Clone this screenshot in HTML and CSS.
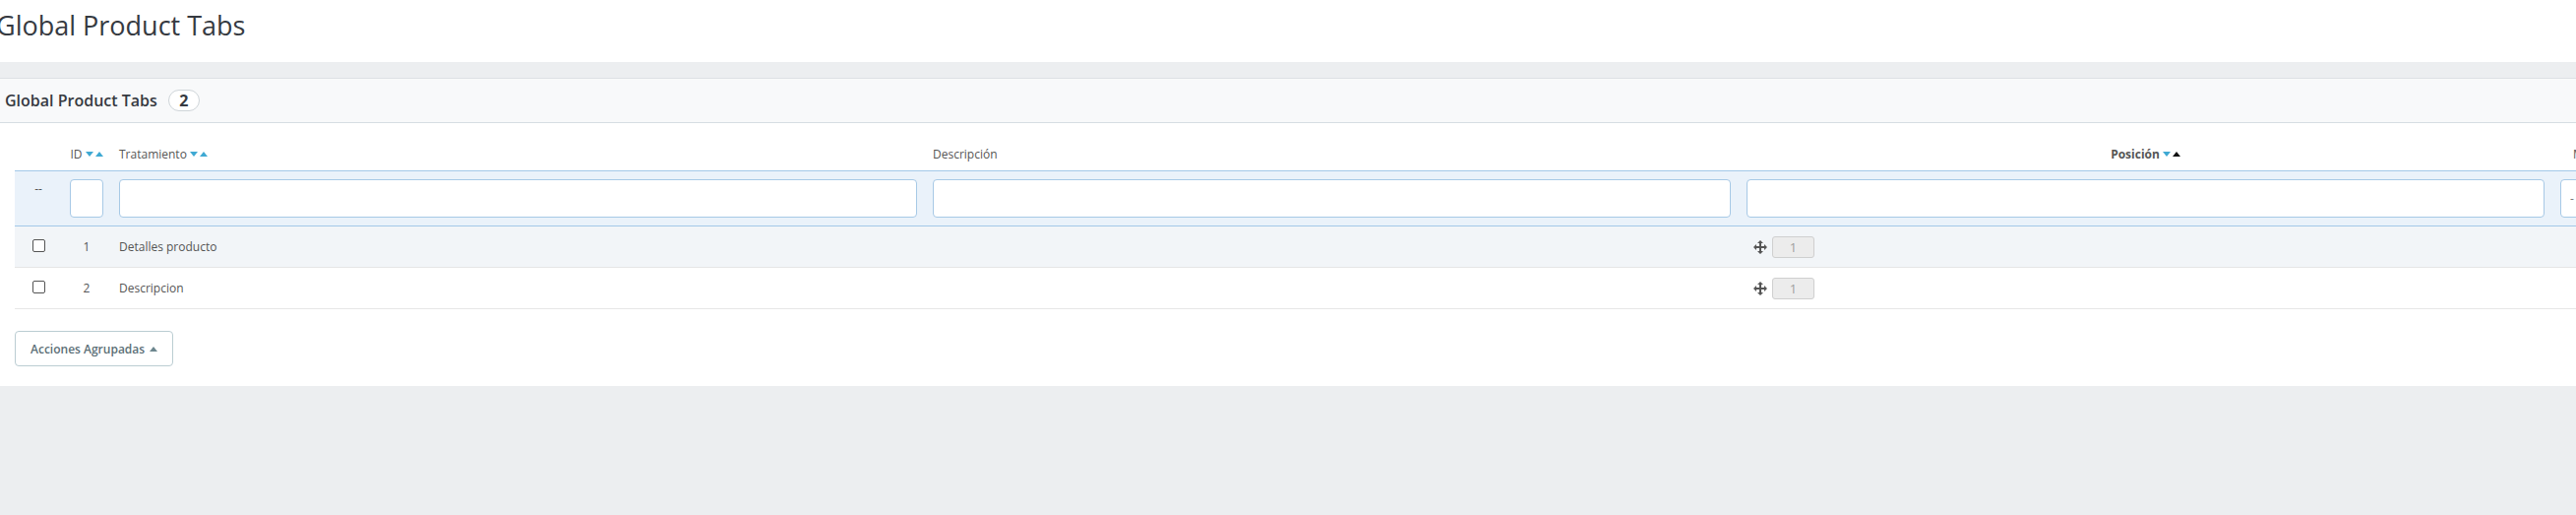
FILE: index.html
```html
<!DOCTYPE html>
<html lang="es">
<head>
<meta charset="utf-8">
<title>Global Product Tabs</title>
<link rel="stylesheet" href="styles.css">
</head>
<body>
<div class="page-head">
  <h1 class="page-title">Global Product Tabs</h1>
</div>
<div class="content">
  <div class="panel">
    <div class="panel-heading">
      <span class="heading-text">Global Product Tabs</span>
      <span class="badge">2</span>
    </div>
    <div class="panel-body">
      <table class="list">
        <colgroup>
          <col class="c-check">
          <col class="c-id">
          <col class="c-wide">
          <col class="c-wide">
          <col class="c-wide">
          <col class="c-last">
        </colgroup>
        <thead>
          <tr class="titles">
            <th></th>
            <th class="center">ID<svg class="sort" width="18" height="6" viewBox="0 0 18 6"><path d="M0 0h8l-4 5z" class="blue"/><path d="M10 5h8l-4-5z" class="blue"/></svg></th>
            <th>Tratamiento<svg class="sort" width="18" height="6" viewBox="0 0 18 6"><path d="M0 0h8l-4 5z" class="blue"/><path d="M10 5h8l-4-5z" class="blue"/></svg></th>
            <th>Descripción</th>
            <th class="center active">Posición<svg class="sort" width="18" height="6" viewBox="0 0 18 6"><path d="M0 0h8l-4 5z" class="blue"/><path d="M10 5h8l-4-5z" class="dark"/></svg></th>
            <th class="last-title">Mostrar</th>
          </tr>
          <tr class="filter">
            <td class="center dashes">--</td>
            <td><span class="field"></span></td>
            <td><span class="field"></span></td>
            <td><span class="field"></span></td>
            <td><span class="field"></span></td>
            <td><span class="field select">-</span></td>
          </tr>
        </thead>
        <tbody>
          <tr class="odd">
            <td class="center"><span class="cb"></span></td>
            <td class="center">1</td>
            <td>Detalles producto</td>
            <td></td>
            <td>
              <svg class="move" width="14" height="14" viewBox="0 0 14 14"><path d="M7 0L10 3H8V6H11V4L14 7L11 10V8H8V11H10L7 14L4 11H6V8H3V10L0 7L3 4V6H6V3H4Z"/></svg><span class="position">1</span>
            </td>
            <td></td>
          </tr>
          <tr>
            <td class="center"><span class="cb"></span></td>
            <td class="center">2</td>
            <td>Descripcion</td>
            <td></td>
            <td>
              <svg class="move" width="14" height="14" viewBox="0 0 14 14"><path d="M7 0L10 3H8V6H11V4L14 7L11 10V8H8V11H10L7 14L4 11H6V8H3V10L0 7L3 4V6H6V3H4Z"/></svg><span class="position">1</span>
            </td>
            <td></td>
          </tr>
        </tbody>
      </table>
      <div class="bulk">
        <button class="btn-bulk" type="button">Acciones Agrupadas<svg class="caret" width="8" height="5" viewBox="0 0 8 5"><path d="M0 5h8L4 0z"/></svg></button>
      </div>
    </div>
  </div>
</div>
</body>
</html>
```
FILE: styles.css
```css
html, body {
  overflow: hidden;
}

body {
  margin: 0;
  font-family: "Open Sans", "Liberation Sans", sans-serif;
  font-size: 12px;
  color: #555;
  background: #eceef0;
}

.page-head {
  background: #fff;
  height: 63px;
  box-sizing: border-box;
  padding-top: 8px;
}

.page-title {
  margin: 0 0 0 -4px;
  font-size: 27px;
  line-height: 36px;
  font-weight: 400;
  color: #363a41;
  white-space: nowrap;
}

.content {
  padding-top: 16px;
}

.panel {
  background: #fff;
  border-top: 1px solid #dde1e4;
  box-shadow: 0 2px 0 rgba(0, 0, 0, 0.05);
  padding-bottom: 20px;
}

.panel-heading {
  height: 44px;
  background: #f8f9fa;
  border-bottom: 1px solid #d6dde2;
  display: flex;
  align-items: center;
  gap: 11px;
  padding-left: 5px;
  font-size: 16px;
  font-weight: 600;
  color: #363a41;
}

.badge {
  box-sizing: border-box;
  height: 22px;
  min-width: 32px;
  border: 1px solid #cfd5d9;
  border-radius: 11px;
  background: #fff;
  display: inline-flex;
  align-items: center;
  justify-content: center;
  font-size: 16px;
  font-weight: 700;
  line-height: 1;
}

.panel-body {
  padding-left: 15px;
}

.list {
  border-collapse: separate;
  border-spacing: 0;
  table-layout: fixed;
  width: 2679px;
}

.c-check { width: 48px; }
.c-id { width: 50px; }
.c-wide { width: 827px; }
.c-last { width: 100px; }

.titles th {
  height: 48px;
  box-sizing: border-box;
  padding: 0 8px 8px;
  vertical-align: bottom;
  text-align: left;
  font-weight: 400;
  line-height: 17px;
  color: #555;
  white-space: nowrap;
  overflow: hidden;
}

.titles th.active {
  font-weight: 700;
}

.titles th.last-title {
  padding-left: 21px;
}

.center,
.titles th.center {
  text-align: center;
}

.sort {
  margin-left: 3px;
  vertical-align: 1px;
}

.sort .blue { fill: #3fa9d3; }
.sort .dark { fill: #111; }

.filter td {
  background: #eaf2fa;
  border-top: 1px solid #a3c8e8;
  border-bottom: 1px solid #a3c8e8;
  padding: 8px;
  vertical-align: top;
}

.filter td.dashes {
  padding-top: 9px;
  line-height: 17px;
}

.field {
  display: block;
  box-sizing: border-box;
  height: 39px;
  background: #fff;
  border: 1px solid #a7c9e6;
  border-radius: 4px;
  color: #777;
  line-height: 37px;
  padding-left: 9px;
}

tbody td {
  height: 42px;
  box-sizing: border-box;
  padding: 0 8px;
  border-bottom: 1px solid #e6e6e6;
  vertical-align: middle;
  line-height: 18px;
  color: #555;
  white-space: nowrap;
}

tbody tr.odd td {
  background: #f2f5f8;
}

.cb {
  display: inline-block;
  box-sizing: border-box;
  width: 13px;
  height: 13px;
  border: 1px solid #555;
  border-radius: 2px;
  background: #fff;
  vertical-align: middle;
  margin-bottom: 3px;
}

.move {
  fill: #555;
  vertical-align: middle;
  margin-left: 7px;
  margin-right: 5px;
}

.position {
  display: inline-block;
  vertical-align: middle;
  box-sizing: border-box;
  width: 43px;
  height: 22px;
  background: #ececec;
  border: 1px solid #cfcfcf;
  border-radius: 3px;
  text-align: center;
  line-height: 20px;
  font-size: 13px;
  color: #a0a0a0;
}

.bulk {
  padding-top: 22px;
}

.btn-bulk {
  box-sizing: border-box;
  height: 36px;
  padding: 0 15px;
  background: #fff;
  border: 1px solid #bbcdd2;
  border-radius: 4px;
  font-family: "Open Sans", "Liberation Sans", sans-serif;
  font-size: 12px;
  font-weight: 600;
  color: #5c6f77;
  display: inline-flex;
  align-items: center;
  gap: 5px;
}

.caret {
  fill: #6c868e;
}
```
